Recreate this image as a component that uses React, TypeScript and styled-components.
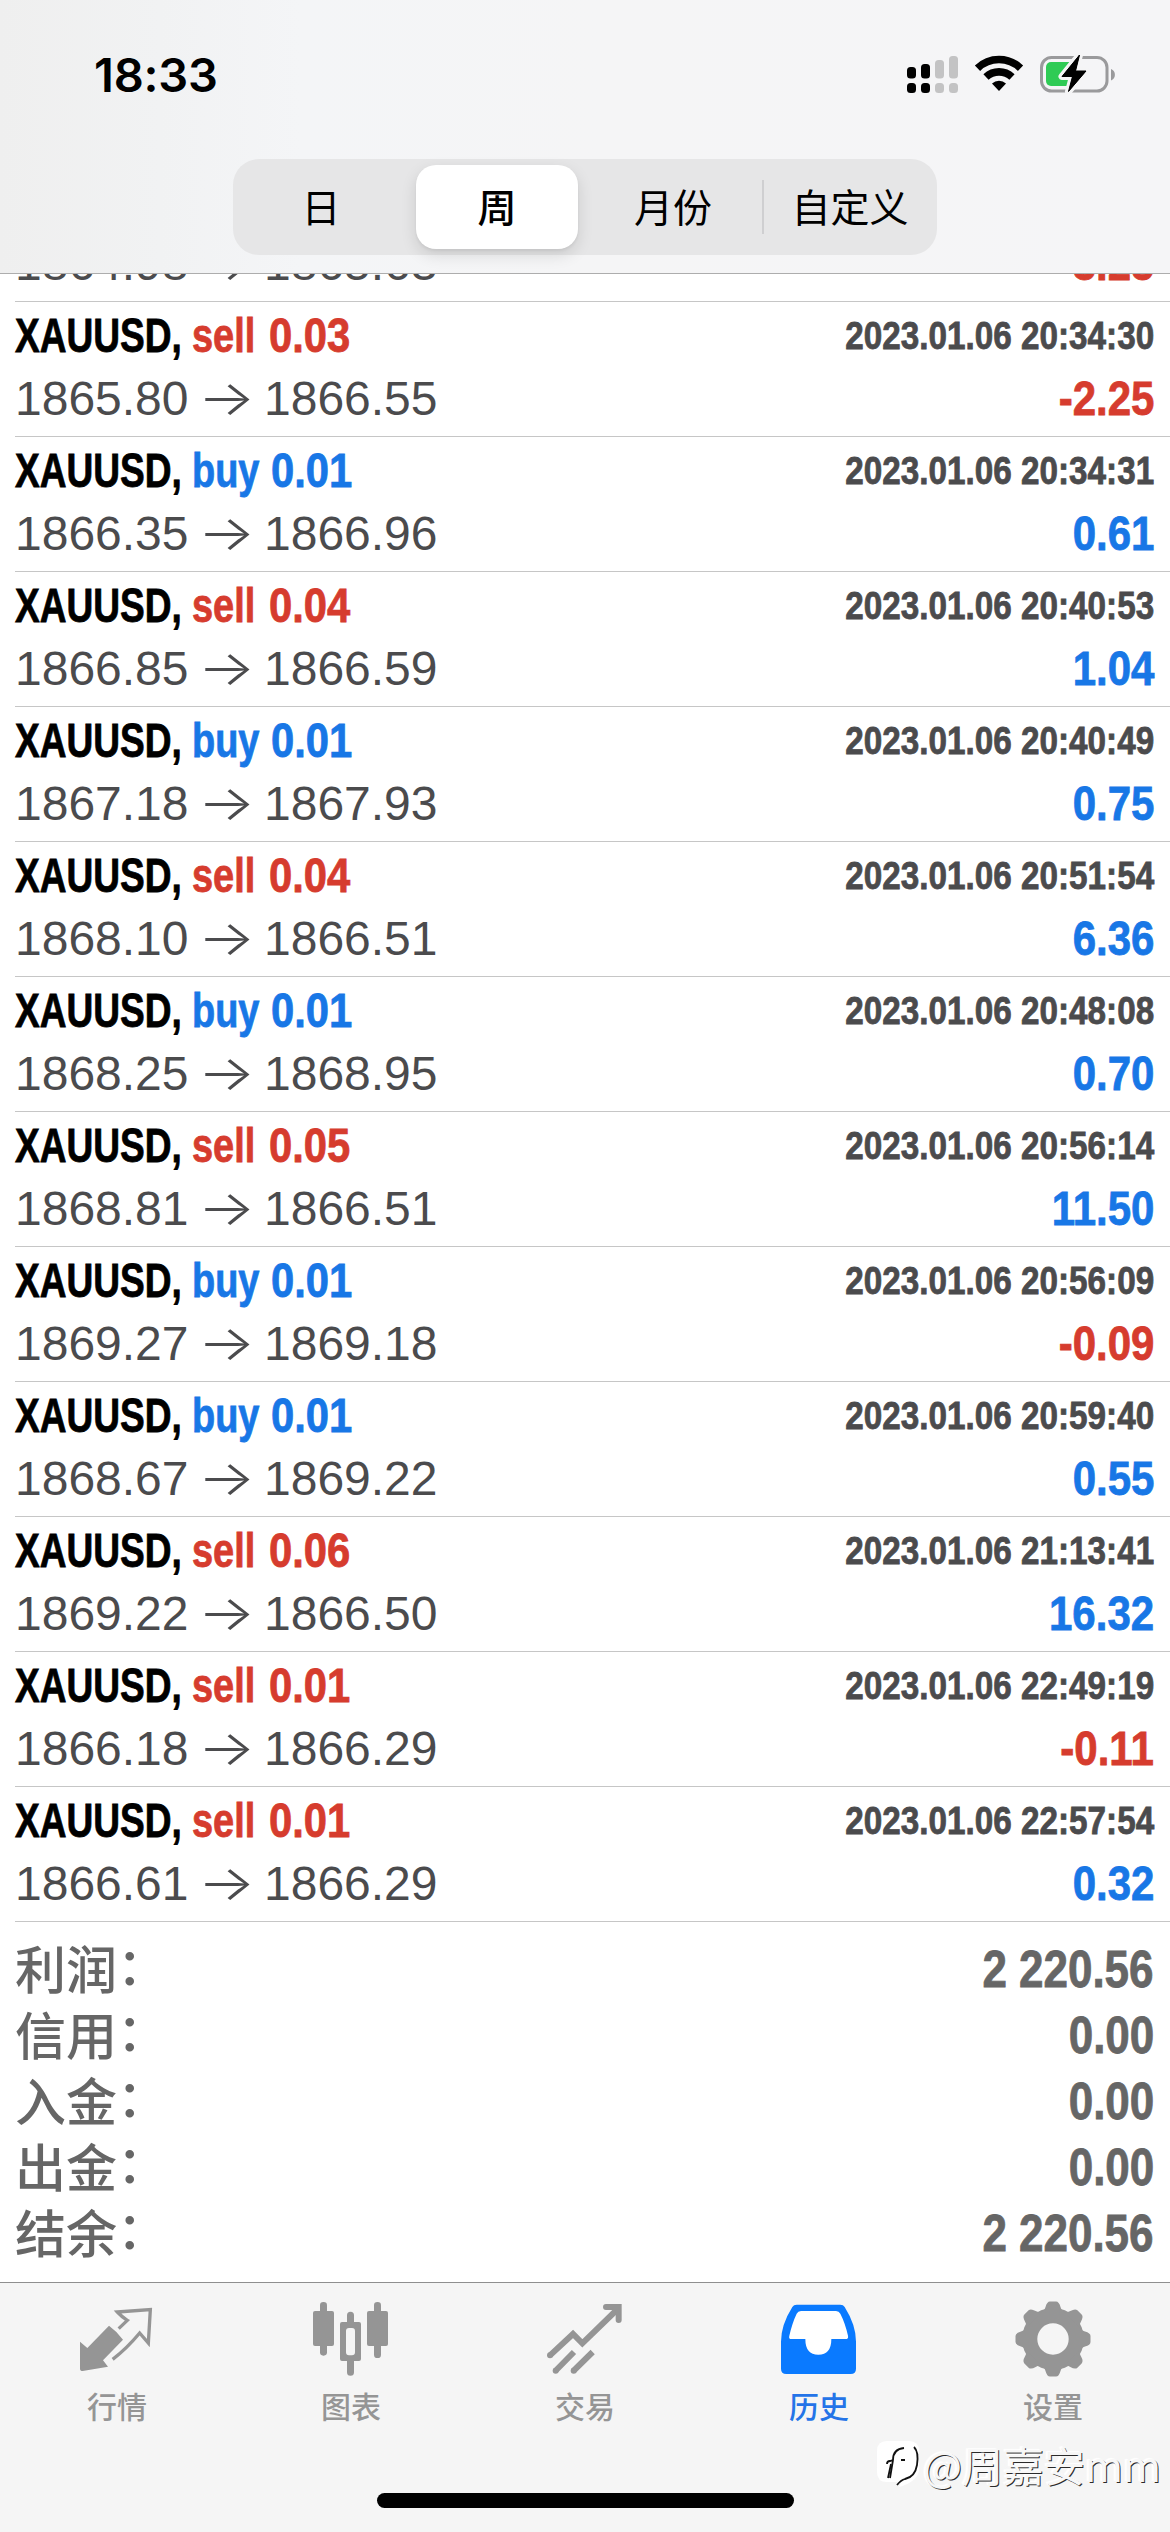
import React from 'react';
import styled, { createGlobalStyle } from 'styled-components';

const SANS = '"Liberation Sans", "Noto Sans CJK SC", sans-serif';
const CJK = '"Noto Sans CJK SC", sans-serif';
const BLUE = '#1877e6';
const RED = '#d63c2e';

const Global = createGlobalStyle`
  body { margin: 0; background: #fff; }
  * { box-sizing: border-box; }
`;

const Screen = styled.div`
  position: relative;
  width: 1170px;
  height: 2532px;
  display: flex;
  flex-direction: column;
  background: #fff;
  font-family: ${SANS};
  overflow: hidden;
`;

/* Header */

const Header = styled.header`
  flex: 0 0 274px;
  display: flex;
  flex-direction: column;
  align-items: center;
  background: linear-gradient(90deg, #efefef 0, #f1f2f3 160px, #f4f5f7 300px, #f5f5f6 600px, #f5f5f7 100%);
  border-bottom: 1px solid #adadad;
`;

const StatusBar = styled.div`
  width: 100%;
  height: 159px;
  padding: 52px 50px 0 94px;
  display: flex;
  justify-content: space-between;
  align-items: flex-start;
`;

const Clock = styled.div`
  font: 600 47px/46px Inter, sans-serif;
  letter-spacing: -0.2px;
  color: #000;
`;

const StatusIcons = styled.svg`
  width: 213px;
  height: 44px;
  display: block;
`;

const Segmented = styled.div`
  width: 704px;
  height: 96px;
  padding: 6px 0;
  display: grid;
  grid-template-columns: repeat(4, 1fr);
  border-radius: 26px;
  background: #e6e6e7;
`;

const Segment = styled.div<{ $on?: boolean }>`
  display: flex;
  align-items: center;
  justify-content: center;
  margin: 0 7px;
  padding-bottom: 4px;
  border-radius: 20px;
  font: ${p => (p.$on ? 500 : 400)} 39px/48px ${CJK};
  color: #000;
  background: ${p => (p.$on ? '#fff' : 'transparent')};
  box-shadow: ${p => (p.$on ? '0 6px 16px rgba(0,0,0,.12), 0 2px 3px rgba(0,0,0,.05)' : 'none')};
`;

const LastSegment = styled(Segment)`
  margin: 0;
  padding-left: 2px;
  background: linear-gradient(#cfcfd1, #cfcfd1) 1px 50% / 2px 54px no-repeat;
`;

/* Deal list */

const Viewport = styled.main`
  flex: 1 1 0;
  min-height: 0;
  display: flex;
  flex-direction: column;
  justify-content: flex-end;
  overflow: hidden;
`;

const Deal = styled.article`
  flex: none;
  height: 135px;
  margin-left: 15px;
  padding: 10px 16px 0 0;
  display: flex;
  flex-direction: column;
  gap: 15px;
  border-bottom: 1px solid #c6c6c6;
`;

const DealLine = styled.div`
  height: 48px;
  display: flex;
  align-items: flex-start;
  font-size: 48px;
  line-height: 48px;
  white-space: nowrap;
`;

const Slot = styled.span<{ $w: number }>`
  flex: 0 0 ${p => p.$w}px;
  width: ${p => p.$w}px;
`;

const Narrow = styled.span<{ $k: number; $color: string; $size?: number; $end?: boolean }>`
  display: inline-block;
  font-weight: 700;
  font-size: ${p => p.$size ?? 48}px;
  line-height: inherit;
  color: ${p => p.$color};
  -webkit-text-stroke: 0.8px currentColor;
  transform: scaleX(${p => p.$k});
  transform-origin: ${p => (p.$end ? '100%' : '0')} 50%;
  margin-left: ${p => (p.$end ? 'auto' : '0')};
`;

const Price = styled.span`
  width: 174px;
  color: #4b4b4d;
`;

const Arrow = styled.span`
  width: 75px;
  height: 48px;
  line-height: 45px;
  text-align: center;
  font-family: Inter, sans-serif;
  font-weight: 300;
  color: #4b4b4d;
  transform: scaleX(1.26);
`;

/* Totals */

const Summary = styled.section`
  flex: none;
  padding: 15px 16px 15px 15px;
`;

const Total = styled.div`
  height: 66px;
  display: flex;
  align-items: flex-start;
  line-height: 66px;
`;

const TotalLabel = styled.span`
  font: 500 51px/60px ${CJK};
  color: #666;
`;

const Colon = styled.span`
  position: relative;
  top: -4px;
`;

/* Tab bar */

const TabBar = styled.footer`
  flex: 0 0 250px;
  display: flex;
  flex-direction: column;
  align-items: center;
  background: #f5f5f5;
  border-top: 1px solid #8f8f8f;
`;

const Tabs = styled.nav`
  width: 100%;
  height: 210px;
  padding-top: 17px;
  display: grid;
  grid-template-columns: repeat(5, 1fr);
`;

const Tab = styled.div<{ $on?: boolean }>`
  display: flex;
  flex-direction: column;
  align-items: center;
  color: ${p => (p.$on ? '#0a7aff' : '#959595')};
`;

const TabIcon = styled.svg`
  width: 78px;
  height: 78px;
  display: block;
`;

const TabLabel = styled.span<{ $on?: boolean }>`
  margin-top: 8px;
  font: 500 30px/38px ${CJK};
  color: ${p => (p.$on ? '#2474e8' : '#959595')};
`;

const HomeBar = styled.div`
  width: 417px;
  height: 15px;
  border-radius: 8px;
  background: #000;
`;

const Watermark = styled.div`
  position: absolute;
  right: 9px;
  top: 2437px;
  display: flex;
  align-items: center;
  gap: 3px;
`;

const MarkText = styled.span`
  font: 400 41px/54px ${CJK};
  color: #f7f7f7;
  text-shadow: 1px 1px 0 #2a2a2a, -2px -1px 1px #fff;
`;

type D = [string, string, string, string, string, string];
const deals: D[] = [
  ['sell', '0.05', '2023.01.06 20:34:29', '1864.98', '1865.63', '-3.25'],
  ['sell', '0.03', '2023.01.06 20:34:30', '1865.80', '1866.55', '-2.25'],
  ['buy', '0.01', '2023.01.06 20:34:31', '1866.35', '1866.96', '0.61'],
  ['sell', '0.04', '2023.01.06 20:40:53', '1866.85', '1866.59', '1.04'],
  ['buy', '0.01', '2023.01.06 20:40:49', '1867.18', '1867.93', '0.75'],
  ['sell', '0.04', '2023.01.06 20:51:54', '1868.10', '1866.51', '6.36'],
  ['buy', '0.01', '2023.01.06 20:48:08', '1868.25', '1868.95', '0.70'],
  ['sell', '0.05', '2023.01.06 20:56:14', '1868.81', '1866.51', '11.50'],
  ['buy', '0.01', '2023.01.06 20:56:09', '1869.27', '1869.18', '-0.09'],
  ['buy', '0.01', '2023.01.06 20:59:40', '1868.67', '1869.22', '0.55'],
  ['sell', '0.06', '2023.01.06 21:13:41', '1869.22', '1866.50', '16.32'],
  ['sell', '0.01', '2023.01.06 22:49:19', '1866.18', '1866.29', '-0.11'],
  ['sell', '0.01', '2023.01.06 22:57:54', '1866.61', '1866.29', '0.32'],
];

const totals = [
  ['利润', '2 220.56'],
  ['信用', '0.00'],
  ['入金', '0.00'],
  ['出金', '0.00'],
  ['结余', '2 220.56'],
];

const DealRow = ({ d: [side, volume, time, open, close, profit] }: { d: D }) => {
  const sideColor = side === 'buy' ? BLUE : RED;
  return (
    <Deal>
      <DealLine>
        <Slot $w={177}><Narrow $k={0.772} $color="#000">XAUUSD,</Narrow></Slot>
        <Slot $w={side === 'buy' ? 79 : 77}><Narrow $k={0.79} $color={sideColor}>{side}</Narrow></Slot>
        <Narrow $k={0.87} $color={sideColor}>{volume}</Narrow>
        <Narrow $k={0.853} $size={39} $color="#4b4b4d" $end>{time}</Narrow>
      </DealLine>
      <DealLine>
        <Price>{open}</Price>
        <Arrow>→</Arrow>
        <Price>{close}</Price>
        <Narrow $k={0.875} $color={profit.startsWith('-') ? RED : BLUE} $end>{profit}</Narrow>
      </DealLine>
    </Deal>
  );
};

const Status = () => (
  <StatusIcons viewBox="907 52 213 44">
    <g fill="#000">
      <rect x="907" y="67" width="9" height="11.5" rx="3.5" />
      <rect x="921" y="64" width="9" height="14.5" rx="3.5" />
      <rect x="907" y="83" width="9" height="10" rx="3.5" />
      <rect x="921" y="83" width="9" height="10" rx="3.5" />
    </g>
    <g fill="#c3c3c4">
      <rect x="935" y="60" width="9" height="18.5" rx="3.5" />
      <rect x="949" y="56" width="9" height="22.5" rx="3.5" />
      <rect x="935" y="83" width="9" height="10" rx="3.5" />
      <rect x="949" y="83" width="9" height="10" rx="3.5" />
    </g>
    <g fill="none" stroke="#000" strokeWidth="7.6">
      <path d="M977.5 68.2a31 31 0 0 1 43 0" />
      <path d="M986 77a19 19 0 0 1 26 0" />
    </g>
    <path d="M992 83.5a10.500 10.500 0 0 1 14 0L999 91z" />
    <rect x="1041.500" y="57.500" width="65.500" height="33.500" rx="10" fill="none" stroke="#9a9a9c" strokeWidth="3" />
    <path d="M1111 69v11.500a6.200 6.200 0 0 0 0-11.500z" fill="#9a9a9c" />
    <path d="M1051 62h22v24h-22a5 5 0 0 1-5-5V67a5 5 0 0 1 5-5z" fill="#2fcb55" />
    <path d="M1079.500 55L1062 76.500h10.500L1068.500 91.500 1086 71h-10.500z" fill="#000" stroke="#f5f5f6" strokeWidth="7" strokeLinejoin="round" paintOrder="stroke" />
    <path d="M1079.500 55L1062 76.500h10.500L1068.500 91.500 1086 71h-10.500z" stroke="#000" strokeLinejoin="round" />
  </StatusIcons>
);

const QuotesIcon = () => (
  <TabIcon viewBox="54 30 234 234" fill="currentColor">
    <path d="M60 155L82 174 147 107Q172 125 189 149L129 211 144 230 68 243Q60 243 60 236z" />
    <path d="M176 116L202 91Q187 82 172 66L271 58.500 265 159 239 129Q200 176 158 208" fill="none" stroke="currentColor" strokeWidth="10" />
  </TabIcon>
);

const ChartIcon = () => (
  <TabIcon viewBox="756 30 234 234" fill="currentColor">
    <rect x="759" y="63" width="63" height="105" rx="6" />
    <rect x="780" y="36" width="21" height="161" rx="10" />
    <rect x="921" y="63" width="63" height="105" rx="6" />
    <rect x="942" y="36" width="21" height="168" rx="10" />
    <path d="M846 96h15V76a10.500 10.500 0 0 1 21 0v20h15q6 0 6 6v105q0 6-6 6h-15v34a10.500 10.500 0 0 1-21 0v-34h-15q-6 0-6-6V102q0-6 6-6zm21 18q-9 0-9 9v64q0 9 9 9h9q9 0 9-9v-64q0-9-9-9z" />
  </TabIcon>
);

const TradeIcon = () => (
  <TabIcon viewBox="48 30 234 234" fill="none" stroke="currentColor" strokeWidth="18">
    <path d="M60 196L129 132 157 160 260 60" strokeLinejoin="miter" />
    <path d="M228 51h38v39" strokeLinecap="round" />
    <path d="M132 186L76 243M188 186L130 243" />
    <g fill="currentColor" stroke="none">
      <circle cx="60" cy="196" r="9" />
      <circle cx="77" cy="242" r="9" />
      <circle cx="131" cy="242" r="9" />
    </g>
  </TabIcon>
);

const HistoryIcon = () => (
  <TabIcon viewBox="750 30 234 234">
    <path d="M800 44h131q9 0 13 7 34 54 34 104v81q0 16-16 16H769q-16 0-16-16v-81q0-50 34-104 4-7 13-7z" fill="currentColor" />
    <path d="M813 63h105q9 0 13 8 14 27 23 66 2 10-7 10h-43q0 47-39 47t-39-47h-42q-9 0-6-10 9-39 22-66 4-8 13-8z" fill="#fff" />
  </TabIcon>
);

const SettingsIcon = () => (
  <TabIcon viewBox="0 0 78 78" fill="currentColor">
    <path fillRule="evenodd" d="M39 8a31 31 0 1 0 0 62a31 31 0 1 0 0-62zM39 23.300a15.700 15.700 0 1 1 0 31.400a15.700 15.700 0 1 1 0-31.400z" />
    {[0, 45, 90, 135, 180, 225, 270, 315].map(a => (
      <path key={a} transform={`rotate(${a} 39 39)`} d="M27 12q3.500-1 4.500-5 1.500-5.500 4.500-5.500h6q3 0 4.500 5.500 1 4 4.500 5z" />
    ))}
  </TabIcon>
);

const tabs = [
  { label: '行情', Icon: QuotesIcon },
  { label: '图表', Icon: ChartIcon },
  { label: '交易', Icon: TradeIcon },
  { label: '历史', Icon: HistoryIcon, on: true },
  { label: '设置', Icon: SettingsIcon },
];

export default function App() {
  return (
    <Screen>
      <Global />
      <Header>
        <StatusBar>
          <Clock>18:33</Clock>
          <Status />
        </StatusBar>
        <Segmented>
          <Segment>日</Segment>
          <Segment $on>周</Segment>
          <Segment>月份</Segment>
          <LastSegment>自定义</LastSegment>
        </Segmented>
      </Header>
      <Viewport>
        {deals.map(d => <DealRow key={d[2]} d={d} />)}
        <Summary>
          {totals.map(([label, value]) => (
            <Total key={label}>
              <TotalLabel>{label}<Colon>：</Colon></TotalLabel>
              <Narrow $k={0.862} $size={51} $color="#666" $end>{value}</Narrow>
            </Total>
          ))}
        </Summary>
      </Viewport>
      <TabBar>
        <Tabs>
          {tabs.map(({ label, Icon, on }) => (
            <Tab key={label} $on={on}>
              <Icon />
              <TabLabel $on={on}>{label}</TabLabel>
            </Tab>
          ))}
        </Tabs>
        <HomeBar />
      </TabBar>
      <Watermark>
        <svg width="44" height="48" viewBox="0 0 44 48">
          <path d="M11 1h22q10 0 10 10v18q0 12-20 18l2-5H11Q1 42 1 32V11Q1 1 11 1z" fill="#fff" />
          <g fill="none" stroke="#111" strokeWidth="1.8">
            <path d="M11 24q0-3 3-3l3-1q0-11 11-12M17 20l-3 18" />
            <path d="M12 38L15 24M25 20h4" />
            <path d="M38 7q5 5 3 18-2 12-12 14-4 1-8 6" />
          </g>
        </svg>
        <MarkText>@周嘉安mm</MarkText>
      </Watermark>
    </Screen>
  );
}
